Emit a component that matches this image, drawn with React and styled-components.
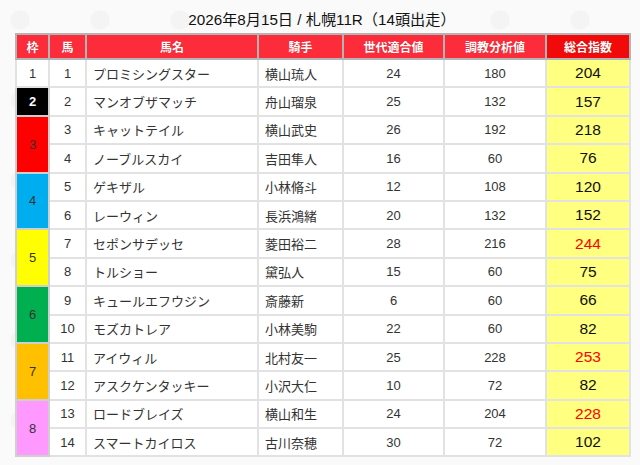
import React from 'react';
import styled, { createGlobalStyle } from 'styled-components';

const GlobalStyle = createGlobalStyle`
  html, body {
    margin: 0;
    padding: 0;
  }
  body {
    font-family: 'Liberation Sans', 'Noto Sans CJK JP', sans-serif;
    color: #333;
    background-color: #fafafa;
    background-image:
      radial-gradient(circle at 20px 20px, #f4f4f4 0 9px, transparent 10px),
      radial-gradient(circle at 60px 45px, #f5f5f5 0 6px, transparent 7px),
      radial-gradient(circle at 40px 70px, #f5f5f5 0 4px, transparent 5px);
    background-size: 80px 80px;
  }
`;

const Page = styled.div`
  width: 640px;
  height: 465px;
  box-sizing: border-box;
  padding: 10px 11px 0 15px;
  overflow: hidden;
`;

const Title = styled.h1`
  margin: 0 0 3px;
  font-size: 15.2px;
  font-weight: 400;
  line-height: 20px;
  text-align: center;
  color: #111;
`;

const Table = styled.table`
  width: 614px;
  border-collapse: collapse;
  table-layout: fixed;
  background: #fff;
`;

const Th = styled.th`
  height: 25px;
  padding: 0;
  box-sizing: border-box;
  background: ${p => (p.$total ? '#f20a0a' : '#fd2c3b')};
  border: 2px solid #b4b4b4;
  color: #fff;
  font-family: 'Noto Sans CJK JP', sans-serif;
  font-size: 12px;
  font-weight: 700;
  text-align: center;
  text-shadow: 0 0 1px rgba(120, 0, 0, 0.5);
`;

const Td = styled.td`
  height: 28.4px;
  padding: 0 ${p => (p.$left ? '6px' : '0')};
  box-sizing: border-box;
  border: 2px solid #e2e2e2;
  font-size: 13px;
  text-align: ${p => (p.$left ? 'left' : 'center')};
  color: #333;
  white-space: nowrap;
`;

const FrameTd = styled(Td)`
  background: ${p => p.$bg};
  color: ${p => (p.$bg === '#000000' ? '#fff' : '#333')};
  font-weight: ${p => (p.$bg === '#000000' ? 700 : 400)};
  border-color: ${p => (p.$bg === '#ffffff' ? '#e2e2e2' : '#cfcfcf')};
`;

const TotalTd = styled(Td)`
  background: #ffff80;
  font-size: 15.5px;
  color: ${p => (p.$high ? '#ff0000' : '#111')};
`;

const frameColors = {
  1: '#ffffff',
  2: '#000000',
  3: '#ff0000',
  4: '#00aef0',
  5: '#ffff00',
  6: '#00b050',
  7: '#ffc000',
  8: '#ff99ff',
};

const horses = [
  [1, 1, 'プロミシングスター', '横山琉人', 24, 180, 204],
  [2, 2, 'マンオブザマッチ', '舟山瑠泉', 25, 132, 157],
  [3, 3, 'キャットテイル', '横山武史', 26, 192, 218],
  [3, 4, 'ノーブルスカイ', '吉田隼人', 16, 60, 76],
  [4, 5, 'ゲキザル', '小林脩斗', 12, 108, 120],
  [4, 6, 'レーウィン', '長浜鴻緒', 20, 132, 152],
  [5, 7, 'セポンサデッセ', '菱田裕二', 28, 216, 244],
  [5, 8, 'トルショー', '黛弘人', 15, 60, 75],
  [6, 9, 'キュールエフウジン', '斎藤新', 6, 60, 66],
  [6, 10, 'モズカトレア', '小林美駒', 22, 60, 82],
  [7, 11, 'アイウィル', '北村友一', 25, 228, 253],
  [7, 12, 'アスクケンタッキー', '小沢大仁', 10, 72, 82],
  [8, 13, 'ロードブレイズ', '横山和生', 24, 204, 228],
  [8, 14, 'スマートカイロス', '古川奈穂', 30, 72, 102],
];

const App = () => {
  return (
    <>
      <GlobalStyle />
      <Page>
        <Title>2026年8月15日 / 札幌11R（14頭出走）</Title>
        <Table>
          <colgroup>
            <col style={{ width: 33 }} />
            <col style={{ width: 37 }} />
            <col style={{ width: 172 }} />
            <col style={{ width: 85 }} />
            <col style={{ width: 101 }} />
            <col style={{ width: 102 }} />
            <col style={{ width: 84 }} />
          </colgroup>
          <thead>
            <tr>
              <Th>枠</Th>
              <Th>馬</Th>
              <Th>馬名</Th>
              <Th>騎手</Th>
              <Th>世代適合値</Th>
              <Th>調教分析値</Th>
              <Th $total>総合指数</Th>
            </tr>
          </thead>
          <tbody>
            {horses.map(([frame, num, name, jockey, gen, train, total], i) => {
              const first = i === 0 || horses[i - 1][0] !== frame;
              const span = horses.filter(h => h[0] === frame).length;
              return (
                <tr key={num}>
                  {first && (
                    <FrameTd rowSpan={span} $bg={frameColors[frame]}>
                      {frame}
                    </FrameTd>
                  )}
                  <Td>{num}</Td>
                  <Td $left>{name}</Td>
                  <Td $left>{jockey}</Td>
                  <Td>{gen}</Td>
                  <Td>{train}</Td>
                  <TotalTd $high={total >= 220}>{total}</TotalTd>
                </tr>
              );
            })}
          </tbody>
        </Table>
      </Page>
    </>
  );
};

export default App;
